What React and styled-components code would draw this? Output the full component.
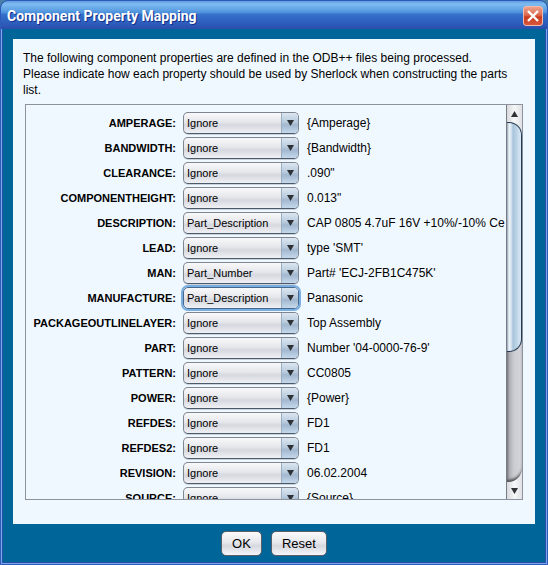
import React from "react";
import styled, { createGlobalStyle, css } from "styled-components";

const GlobalStyle = createGlobalStyle`
  * { box-sizing: border-box; }
  html, body, #root { height: 100%; }
  body {
    margin: 0;
    background: #4a7fa8;
    color: #000;
    font: 12px/16px "Liberation Sans", Arial, sans-serif;
  }
`;

const Window = styled.main`
  display: flex;
  flex-direction: column;
  height: 100vh;
  overflow: hidden;
  border: 1px solid #2d5bb9;
  border-radius: 8px 8px 0 0;
  background: #006699;
  box-shadow: inset 0 0 0 1px #7ba6ea, inset 0 0 0 2px #2450a8;
`;

const TitleBar = styled.header`
  display: flex;
  flex: none;
  align-items: center;
  justify-content: space-between;
  height: 28px;
  padding: 2px 4px 0 6px;
  border-radius: 7px 7px 0 0;
  border-bottom: 1px solid #2a4fae;
  background: linear-gradient(#5f9be2 0, #7fbcf0 3px, #64a6e6 8px, #4a8edb 12px, #3672cb 13px, #2f62c0 20px, #2b51b0 27px);
`;

const Title = styled.h1`
  margin: 0;
  color: #fff;
  font: bold 14px/20px Roboto, "Open Sans", sans-serif;
  text-shadow: 1px 1px 0 #14308a;
`;

const CloseButton = styled.button`
  display: grid;
  place-items: center;
  width: 20px;
  height: 20px;
  padding: 0;
  border: 1px solid #f3b9aa;
  border-radius: 3px;
  background: linear-gradient(#efa28c, #dc6a50 45%, #cb3d20 55%, #d8573b);
`;

const Body = styled.div`
  display: flex;
  flex: 1;
  flex-direction: column;
  min-height: 0;
  margin: 0 2px 2px;
  padding: 10px 10px 6px;
`;

const Panel = styled.section`
  display: flex;
  flex: 1;
  flex-direction: column;
  min-height: 0;
  padding: 11px 12px 24px;
  background: #f0f8ff;
`;

const Intro = styled.p`
  flex: none;
  margin: 0 0 6px -2px;
`;

const ScrollPane = styled.div`
  display: flex;
  flex: 1;
  min-height: 0;
  border: 1px solid #8c929e;
`;

const List = styled.div`
  flex: 1;
  min-width: 0;
  overflow: hidden;
  padding-top: 5px;
`;

const Row = styled.div`
  display: grid;
  grid-template-columns: 150px 116px 1fr;
  column-gap: 7px;
  align-items: center;
  height: 25px;
  white-space: nowrap;
`;

const Label = styled.label`
  justify-self: end;
  font-size: 11px;
  font-weight: bold;
`;

const Value = styled.span`
  overflow: hidden;
  padding-left: 1px;
`;

const ComboBox = styled.span`
  display: grid;
  grid-template-columns: 1fr 17px;
  align-items: center;
  height: 22px;
  border: 1px solid #7f8591;
  border-bottom-color: #4d5a6a;
  border-radius: 5px;
  background: linear-gradient(#f9f9fb, #e6e7eb 45%, #d6d8df 60%, #f0f1f5);
  box-shadow: 0 1px 0 #c9d2dc;
  overflow: hidden;
  ${({ $focused }) =>
    $focused &&
    css`
      border-color: #44698f;
      box-shadow: 0 0 0 2px #7aaee0;
    `}
`;

const Select = styled.select`
  grid-area: 1 / 1 / 2 / 3;
  width: 100%;
  height: 20px;
  padding: 1px 18px 0 3px;
  border: 0;
  outline: 0;
  appearance: none;
  background: transparent;
  color: #000;
  font: 11px/16px "Liberation Sans", Arial, sans-serif;
`;

const ArrowCell = styled.span`
  grid-area: 1 / 2;
  display: grid;
  place-items: center;
  height: 20px;
  border-left: 1px solid #9aaec2;
  background: linear-gradient(#dbe6f1, #b9cbdd 45%, #a2b8cf 60%, #c5d9ec);
  pointer-events: none;
`;

const ScrollBar = styled.div`
  display: flex;
  flex: none;
  flex-direction: column;
  width: 16px;
  border-left: 1px solid #777c84;
`;

const ScrollButton = styled.button`
  display: grid;
  flex: none;
  place-items: center;
  height: 17px;
  padding: 0;
  border: 0;
  background: linear-gradient(90deg, #d8dadd, #f6f7f8 50%, #dfe1e4);
`;

const Track = styled.div`
  display: grid;
  flex: 1;
  grid-template-rows: 64% 1fr;
  min-height: 0;
  background: linear-gradient(90deg, #d8dadd, #f6f7f8 50%, #dfe1e4);
`;

const Thumb = styled.div`
  z-index: 1;
  border: 1px solid #253b52;
  border-left: 0;
  border-radius: 0 13px 13px 0;
  background: linear-gradient(90deg, #8ba1b7 0, #eef3f8 2px, #dce7f2 4px, #a9c3da 6px, #bfd5e8 10px, #dcecf8);
`;

const Groove = styled.div`
  margin-top: -14px;
  border-radius: 0 0 14px 0;
  background: linear-gradient(90deg, #85868b, #b3b4b9 3px, #cbccd2 7px, #d6d7dc);
  box-shadow: inset 0 -3px 3px -1px #4b4c50;
`;

const Actions = styled.footer`
  display: flex;
  flex: none;
  justify-content: center;
  gap: 9px;
  padding-top: 7px;
`;

const ActionButton = styled.button`
  flex: none;
  height: 25px;
  padding: 0 10px;
  border: 1px solid #5b5e68;
  border-radius: 5px;
  background: linear-gradient(#fbfbfc, #e7e8ec 45%, #d6d8df 60%, #f5f6fa);
  color: #000;
  font: 13px/16px "Liberation Sans", Arial, sans-serif;
`;

const Triangle = ({ up }) => (
  <svg width="7" height="6" viewBox="0 0 7 6" aria-hidden="true">
    <path d={up ? "M3.5 0L7 6H0Z" : "M0 0H7L3.5 6Z"} fill="#2e3136" />
  </svg>
);

const properties = [
  ["AMPERAGE", "Ignore", "{Amperage}"],
  ["BANDWIDTH", "Ignore", "{Bandwidth}"],
  ["CLEARANCE", "Ignore", '.090"'],
  ["COMPONENTHEIGHT", "Ignore", '0.013"'],
  ["DESCRIPTION", "Part_Description", "CAP 0805 4.7uF 16V +10%/-10% Ce"],
  ["LEAD", "Ignore", "type 'SMT'"],
  ["MAN", "Part_Number", "Part# 'ECJ-2FB1C475K'"],
  ["MANUFACTURE", "Part_Description", "Panasonic", true],
  ["PACKAGEOUTLINELAYER", "Ignore", "Top Assembly"],
  ["PART", "Ignore", "Number '04-0000-76-9'"],
  ["PATTERN", "Ignore", "CC0805"],
  ["POWER", "Ignore", "{Power}"],
  ["REFDES", "Ignore", "FD1"],
  ["REFDES2", "Ignore", "FD1"],
  ["REVISION", "Ignore", "06.02.2004"],
  ["SOURCE", "Ignore", "{Source}"],
];

function PropertyRow({ name, usage, value, focused }) {
  const id = `property-${name.toLowerCase()}`;
  return (
    <Row>
      <Label htmlFor={id}>{name}:</Label>
      <ComboBox $focused={focused}>
        <Select id={id} defaultValue={usage}>
          <option>Ignore</option>
          <option>Part_Description</option>
          <option>Part_Number</option>
        </Select>
        <ArrowCell>
          <Triangle />
        </ArrowCell>
      </ComboBox>
      <Value>{value}</Value>
    </Row>
  );
}

export default function App() {
  return (
    <>
      <GlobalStyle />
      <Window>
        <TitleBar>
          <Title>Component Property Mapping</Title>
          <CloseButton type="button" aria-label="Close">
            <svg width="12" height="12" viewBox="0 0 12 12" aria-hidden="true">
              <path d="M1 1L11 11M11 1L1 11" stroke="#fff" strokeWidth="2.4" />
            </svg>
          </CloseButton>
        </TitleBar>
        <Body>
          <Panel>
            <Intro>
              The following component properties are defined in the ODB++ files being processed.
              <br />
              Please indicate how each property should be used by Sherlock when constructing the parts list.
            </Intro>
            <ScrollPane>
              <List>
                {properties.map(([name, usage, value, focused]) => (
                  <PropertyRow key={name} name={name} usage={usage} value={value} focused={focused} />
                ))}
              </List>
              <ScrollBar>
                <ScrollButton type="button" aria-label="Scroll up">
                  <Triangle up />
                </ScrollButton>
                <Track>
                  <Thumb />
                  <Groove />
                </Track>
                <ScrollButton type="button" aria-label="Scroll down">
                  <Triangle />
                </ScrollButton>
              </ScrollBar>
            </ScrollPane>
          </Panel>
          <Actions>
            <ActionButton type="button">OK</ActionButton>
            <ActionButton type="button">Reset</ActionButton>
          </Actions>
        </Body>
      </Window>
    </>
  );
}
